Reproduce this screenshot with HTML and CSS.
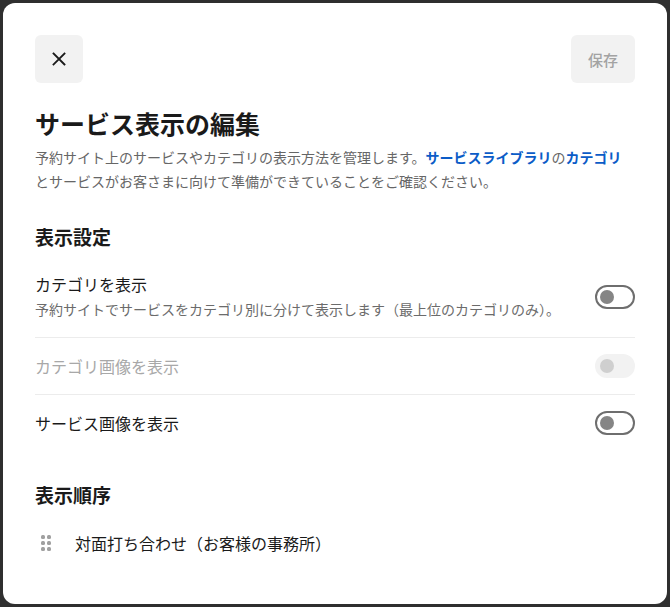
FILE: index.html
```html
<!DOCTYPE html>
<html lang="ja">
<head>
<meta charset="utf-8">
<link rel="stylesheet" href="styles.css">
</head>
<body>
<div class="modal">
  <div class="header">
    <button class="btn-close" aria-label="閉じる">
      <svg width="14" height="14" viewBox="0 0 14 14"><path d="M1.5 1.5L12.5 12.5M12.5 1.5L1.5 12.5" stroke="#1a1a1a" stroke-width="1.8" stroke-linecap="square"/></svg>
    </button>
    <button class="btn-save">保存</button>
  </div>
  <h1 class="title">サービス表示の編集</h1>
  <p class="desc">予約サイト上のサービスやカテゴリの表示方法を管理します。<a class="link">サービスライブラリ</a>の<a class="link">カテゴリ</a>とサービスがお客さまに向けて準備ができていることをご確認ください。</p>

  <h2 class="section-title">表示設定</h2>
  <div class="setting-list">
    <div class="setting-row">
      <div class="setting-text">
        <div class="setting-label">カテゴリを表示</div>
        <div class="setting-desc">予約サイトでサービスをカテゴリ別に分けて表示します（最上位のカテゴリのみ）。</div>
      </div>
      <span class="toggle"><span class="knob"></span></span>
    </div>
    <div class="setting-row">
      <div class="setting-text">
        <div class="setting-label disabled">カテゴリ画像を表示</div>
      </div>
      <span class="toggle toggle-disabled"><span class="knob"></span></span>
    </div>
    <div class="setting-row">
      <div class="setting-text">
        <div class="setting-label">サービス画像を表示</div>
      </div>
      <span class="toggle"><span class="knob"></span></span>
    </div>
  </div>

  <h2 class="section-title order-title">表示順序</h2>
  <div class="order-item">
    <span class="drag">
      <i></i><i></i><i></i><i></i><i></i><i></i>
    </span>
    <span class="order-label">対面打ち合わせ（お客様の事務所）</span>
  </div>
</div>
</body>
</html>
```

FILE: styles.css
```css
html, body {
  margin: 0;
  padding: 0;
  background: #2f2f2f;
  height: 607px;
  overflow: hidden;
}
body {
  padding: 3px;
  box-sizing: border-box;
  font-family: "Noto Sans CJK JP", "Noto Sans", sans-serif;
  color: #1a1a1a;
}
.modal {
  width: 664px;
  height: 601px;
  box-sizing: border-box;
  background: #fff;
  border-radius: 12px;
  padding: 32px;
}
.header {
  display: flex;
  justify-content: space-between;
  align-items: center;
  height: 48px;
}
button {
  border: none;
  font-family: inherit;
  cursor: pointer;
}
.btn-close {
  width: 48px;
  height: 48px;
  border-radius: 6px;
  background: #f2f2f2;
  display: flex;
  align-items: center;
  justify-content: center;
  padding: 0;
}
.btn-save {
  width: 64px;
  height: 48px;
  border-radius: 6px;
  background: #f2f2f2;
  color: #a3a3a3;
  font-size: 15px;
  font-weight: 500;
  padding: 0;
}
.title {
  margin: 24px 0 0;
  font-size: 25px;
  line-height: 32px;
  font-weight: 700;
  letter-spacing: 0;
}
.desc {
  margin: 6px 0 0;
  font-size: 14px;
  line-height: 24px;
  color: #666;
}
.link {
  color: #0b5cc7;
  font-weight: 700;
  text-decoration: none;
}
.section-title {
  margin: 30px 0 0;
  font-size: 19px;
  line-height: 28px;
  font-weight: 700;
}
.setting-list {
  margin-top: 5px;
}
.setting-row {
  display: flex;
  align-items: center;
  justify-content: space-between;
  padding: 16px 0;
  border-bottom: 1px solid #ececec;
}
.setting-row:last-child {
  border-bottom: none;
}
.setting-label {
  font-size: 16px;
  line-height: 24px;
  color: #1a1a1a;
}
.setting-label.disabled {
  color: #a8a8a8;
}
.setting-desc {
  margin-top: 1px;
  font-size: 14px;
  line-height: 24px;
  color: #6b6b6b;
}
.toggle {
  flex: none;
  width: 40px;
  height: 24px;
  box-sizing: border-box;
  border: 2px solid #6e6e6e;
  border-radius: 12px;
  background: #fff;
  display: flex;
  align-items: center;
  padding-left: 3px;
}
.knob {
  width: 14px;
  height: 14px;
  border-radius: 50%;
  background: #858585;
}
.toggle-disabled {
  border-color: #f2f2f2;
  background: #f2f2f2;
}
.toggle-disabled .knob {
  background: #cfcfcf;
}
.order-title {
  margin-top: 30px;
}
.order-item {
  display: flex;
  align-items: center;
  margin-top: 22px;
  height: 24px;
}
.drag {
  display: grid;
  grid-template-columns: 4px 4px;
  grid-auto-rows: 4px;
  column-gap: 2px;
  row-gap: 2px;
  margin-left: 6px;
  width: 10px;
}
.drag i {
  display: block;
  width: 4px;
  height: 4px;
  border-radius: 1.5px;
  background: #a0a0a0;
}
.order-label {
  margin-left: 24px;
  font-size: 16px;
  line-height: 24px;
}
```
